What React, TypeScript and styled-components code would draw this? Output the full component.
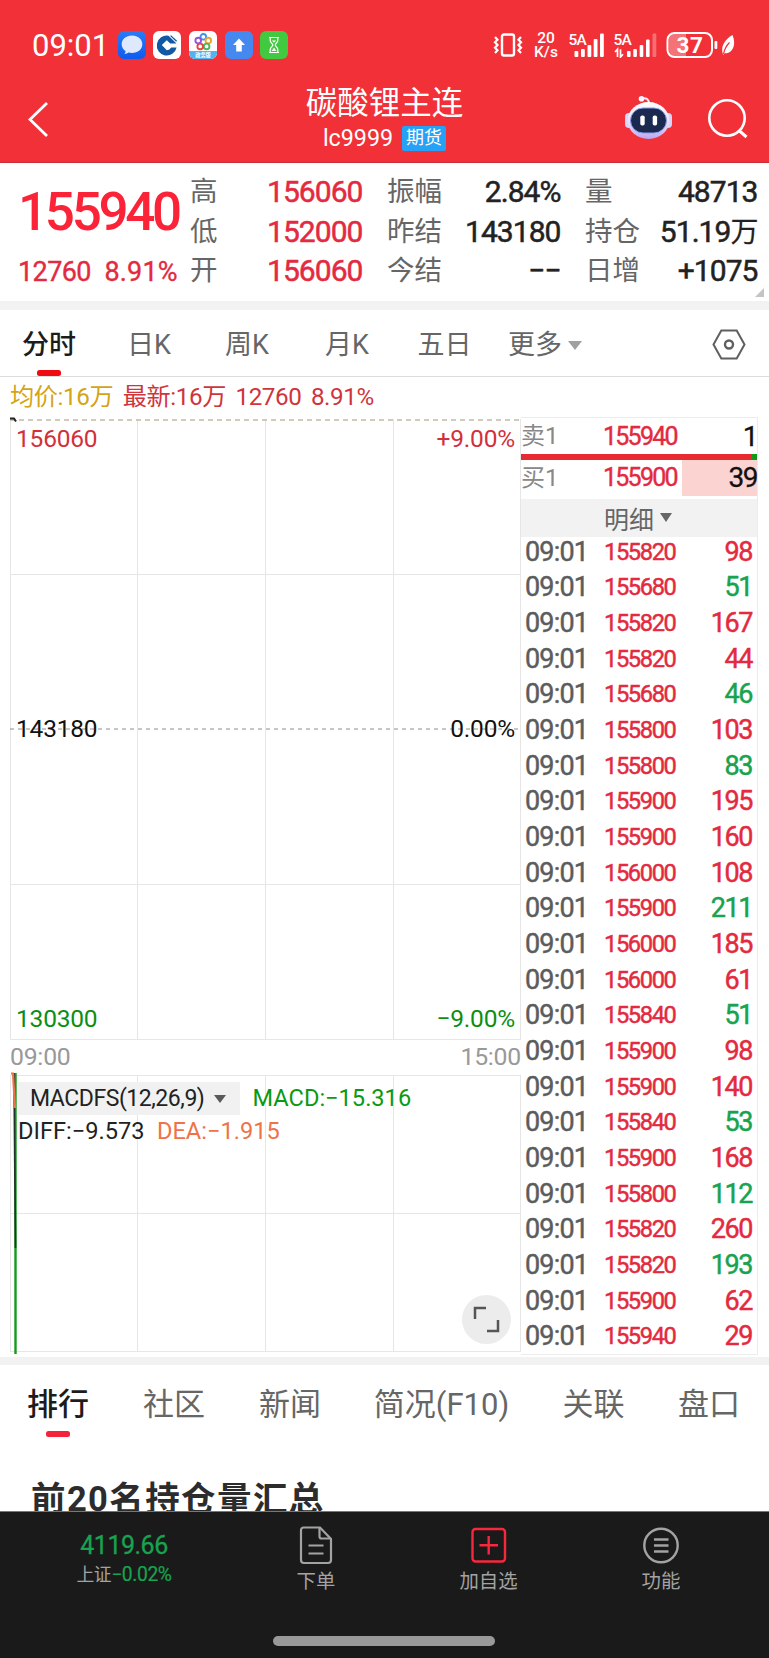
import React from 'react';
import styled, { createGlobalStyle } from 'styled-components';

const Global = createGlobalStyle`
  * { box-sizing: border-box; }
  body {
    margin: 0;
    background: #fff;
    font-family: Roboto, "Noto Sans CJK SC", sans-serif;
    color: #222;
  }
`;

const RED = '#e32a40';
const GREEN = '#17a34f';
const MARK_RED = '#f00a12';

const Screen = styled.div`
  width: 769px;
  height: 1658px;
  display: flex;
  flex-direction: column;
  overflow: hidden;
  background: #fff;
`;

/* ---------- header ---------- */
const Header = styled.header`
  height: 163px;
  flex: none;
  background: #f13137;
  border-bottom: 1px solid #c92f38;
  color: #fff;
`;
const StatusBar = styled.div`
  height: 73px;
  padding: 17px 33px 0 32px;
  display: flex;
  align-items: center;
`;
const Clock = styled.span`
  width: 85.5px;
  font-size: 31px;
  letter-spacing: 0;
  line-height: 36px;
  padding-top: 1px;
`;
const AppIcons = styled.div`
  display: flex;
  gap: 7.7px;
  svg { display: block; }
`;
const StatusRight = styled.div`
  margin-left: auto;
  display: flex;
  align-items: center;
  svg { display: block; }
`;
const NetSpeed = styled.div`
  width: 26px;
  margin: 0 10px 0 10px;
  display: flex;
  flex-direction: column;
  align-items: center;
  font-size: 15.5px;
  font-weight: 500;
  line-height: 14px;
  white-space: nowrap;
`;
const TitleBar = styled.div`
  height: 89px;
  display: grid;
  grid-template-columns: 200px 1fr 200px;
`;
const TitleSide = styled.div<{ $end?: boolean }>`
  display: flex;
  align-items: flex-start;
  justify-content: ${(p) => (p.$end ? 'flex-end' : 'flex-start')};
  padding: ${(p) => (p.$end ? '22px 19px 0 0' : '29px 0 0 26px')};
  gap: 34px;
`;
const TitleMid = styled.div`
  display: flex;
  flex-direction: column;
  align-items: center;
  padding-top: 11px;
`;
const Title = styled.div`
  font-size: 31.5px;
  line-height: 40px;
`;
const SubTitle = styled.div`
  display: flex;
  align-items: center;
  gap: 9px;
  font-size: 23.3px;
  line-height: 28px;
`;
const Badge = styled.span`
  width: 44px;
  height: 25px;
  border-radius: 2px;
  background: #25a2f6;
  font-size: 18px;
  line-height: 24px;
  text-align: center;
`;

/* ---------- quote ---------- */
const Quote = styled.section`
  height: 138px;
  flex: none;
  display: grid;
  grid-template-columns: 190px 172px 25px 173px 25px 172px;
  padding-top: 9px;
  position: relative;
`;
const PriceBox = styled.div`
  padding-left: 18px;
  color: #fb2338;
`;
const BigPrice = styled.div`
  font-size: 53px;
  font-weight: 500;
  letter-spacing: -3.3px;
  line-height: 62px;
  height: 79px;
  padding-top: 9px;
`;
const PriceChange = styled.div`
  display: flex;
  gap: 13.5px;
  color: ${RED};
  font-size: 27px;
  letter-spacing: -0.6px;
  line-height: 42px;
  -webkit-text-stroke: 0.35px currentColor;
  span + span { letter-spacing: 0.2px; }
`;
const StatCol = styled.div`
  display: flex;
  flex-direction: column;
`;
const Stat = styled.div<{ $color?: string }>`
  height: 39.7px;
  line-height: 40px;
  display: flex;
  justify-content: space-between;
  color: ${(p) => p.$color || '#222'};
  white-space: nowrap;
`;
const StatLabel = styled.span`
  font-size: 27.5px;
  color: #666;
`;
const StatValue = styled.span`
  font-size: 30px;
  letter-spacing: -0.95px;
  margin-right: -0.5px;
  -webkit-text-stroke: 0.5px currentColor;
`;
const Wan = styled.span`
  font-size: 28px;
  -webkit-text-stroke: 0.2px currentColor;
`;
const Corner = styled.i`
  position: absolute;
  right: 5px;
  bottom: 4px;
  border-left: 9px solid transparent;
  border-bottom: 9px solid #c4c4c4;
`;
const Divider = styled.div<{ $h: number }>`
  height: ${(p) => p.$h}px;
  flex: none;
  background: #f2f2f2;
`;

/* ---------- period tabs ---------- */
const PeriodTabs = styled.nav`
  height: 67px;
  flex: none;
  border-bottom: 1px solid #dcdcdc;
  display: grid;
  grid-template-columns: 98px 102px 94px 106px 89px 112px 1fr;
  font-size: 27px;
`;
const Tab = styled.div<{ $active?: boolean }>`
  display: flex;
  flex-direction: column;
  align-items: center;
  color: ${(p) => (p.$active ? '#1c1c1c' : '#666')};
  font-weight: ${(p) => (p.$active ? 500 : 400)};
  line-height: 40px;
  padding-top: 15px;
  white-space: nowrap;
`;
const Mark = styled.i<{ $color: string; $gap: number }>`
  width: 24px;
  height: 6px;
  border-radius: 2.5px;
  background: ${(p) => p.$color};
  margin-top: ${(p) => p.$gap}px;
`;
const MoreTab = styled.span`
  display: flex;
  align-items: center;
  gap: 6px;
`;
const Caret = styled.i<{ $w: number; $h: number; $color: string }>`
  border-left: ${(p) => p.$w / 2}px solid transparent;
  border-right: ${(p) => p.$w / 2}px solid transparent;
  border-top: ${(p) => p.$h}px solid ${(p) => p.$color};
`;
const HexWrap = styled.div`
  justify-self: end;
  padding: 18px 23px 0 0;
`;

/* ---------- chart ---------- */
const Legend = styled.div`
  height: 40px;
  flex: none;
  display: flex;
  gap: 9.5px;
  padding-left: 10px;
  font-size: 24.2px;
  letter-spacing: -0.4px;
  line-height: 40px;
  color: #d0343c;
  white-space: nowrap;
`;
const AvgPrice = styled.span`
  color: #d3a416;
`;
const Main = styled.section`
  height: 940px;
  flex: none;
  display: grid;
  grid-template-columns: 521px 237px;
`;
const ChartCol = styled.div`
  display: flex;
  flex-direction: column;
  padding: 2px 0 0 10px;
`;
const Plot = styled.div<{ $h: number }>`
  position: relative;
  height: ${(p) => p.$h}px;
  > svg { display: block; overflow: visible; }
`;
const PlotLabels = styled.div`
  position: absolute;
  inset: 0;
  padding: 5px 6px 6px 6px;
  display: flex;
  flex-direction: column;
  justify-content: space-between;
`;
const LabelRow = styled.div<{ $color: string }>`
  display: flex;
  justify-content: space-between;
  font-size: 24.5px;
  letter-spacing: -0.2px;
  line-height: 30px;
  color: ${(p) => p.$color};
`;
const TimeRow = styled.div`
  height: 35px;
  display: flex;
  justify-content: space-between;
  font-size: 24.8px;
  letter-spacing: -0.25px;
  line-height: 34px;
  color: #999;
`;
const Indicator = styled.div`
  position: absolute;
  left: 8px;
  top: 7px;
  font-size: 23.6px;
`;
const IndRow = styled.div`
  display: flex;
  align-items: center;
  height: 33px;
  line-height: 33px;
  gap: 12.5px;
  white-space: nowrap;
`;
const IndPicker = styled.span`
  width: 222px;
  height: 33px;
  padding-left: 12px;
  display: flex;
  align-items: center;
  gap: 10px;
  background: #f1f1f1;
  font-size: 23px;
  letter-spacing: -0.45px;
`;
const IndValue = styled.span<{ $color: string }>`
  color: ${(p) => p.$color};
`;
const Expand = styled.button`
  position: absolute;
  right: 10px;
  bottom: 8px;
  width: 49px;
  height: 49px;
  padding: 0;
  border: 0;
  border-radius: 50%;
  background: #ececec;
  display: grid;
  place-items: center;
`;

/* ---------- order book ---------- */
const Book = styled.div`
  border: 1px solid #ececec;
  border-left: 0;
  height: 938px;
  display: flex;
  flex-direction: column;
`;
const Level = styled.div<{ $h: number }>`
  height: ${(p) => p.$h}px;
  line-height: ${(p) => p.$h + 1}px;
  display: grid;
  grid-template-columns: 82px 79px 1fr;
  font-size: 25px;
`;
const Side = styled.span`
  color: #888;
  font-size: 24px;
  letter-spacing: 0;
`;
const LevelPrice = styled.span`
  color: ${RED};
  letter-spacing: -1.75px;
  -webkit-text-stroke: 0.4px currentColor;
`;
const LevelQty = styled.span<{ $fill?: boolean }>`
  text-align: right;
  font-size: 28px;
  letter-spacing: -1.5px;
  color: #111;
  background: ${(p) => (p.$fill ? '#fbd3d1' : 'transparent')};
  -webkit-text-stroke: 0.3px currentColor;
`;
const Ratio = styled.div`
  height: 6px;
  background: linear-gradient(to right, #e62c30 0 230px, #109a18 230px);
`;
const DetailHead = styled.div`
  height: 39px;
  margin-top: 4px;
  background: #f2f2f2;
  display: flex;
  align-items: center;
  gap: 6px;
  padding-left: 83px;
  font-size: 25px;
  color: #666;
`;
const Trades = styled.div`
  display: grid;
  grid-auto-rows: 35.68px;
  margin-top: -3px;
`;
const Trade = styled.div`
  display: grid;
  grid-template-columns: 79px 90px 1fr;
  padding: 0 5px 0 4px;
  line-height: 36.5px;
  font-size: 27px;
  -webkit-text-stroke: 0.45px currentColor;
`;
const TradeTime = styled.span`
  color: #5c5c5c;
  letter-spacing: -0.8px;
`;
const TradePrice = styled.span`
  color: ${RED};
  font-size: 23.7px;
  letter-spacing: -1.4px;
`;
const TradeQty = styled.span<{ $up: boolean }>`
  text-align: right;
  letter-spacing: -1.4px;
  color: ${(p) => (p.$up ? RED : GREEN)};
`;

/* ---------- section tabs ---------- */
const SectionTabs = styled.nav`
  height: 85px;
  flex: none;
  display: grid;
  grid-template-columns: 116px 116px 116px 187px 117px 114px;
  font-size: 31px;
`;
const SectionTab = styled(Tab)`
  padding-top: 20px;
`;
const Heading = styled.h2`
  flex: none;
  height: 61px;
  margin: 0;
  padding: 28px 0 0 31px;
  font-size: 34.5px;
  letter-spacing: 1.4px;
  line-height: 42px;
  color: #2c2c2c;
  white-space: nowrap;
`;

/* ---------- footer ---------- */
const Footer = styled.footer`
  height: 147px;
  flex: none;
  position: relative;
  background: #1a1a1a;
  border-top: 1px solid #777;
  display: grid;
  grid-template-columns: 230px 172px 173px 172px;
  align-items: start;
`;
const IndexBox = styled.div`
  padding: 19px 0 0 18px;
  text-align: center;
  color: ${GREEN};
`;
const IndexValue = styled.div`
  font-size: 25px;
  letter-spacing: -0.5px;
  line-height: 30px;
  -webkit-text-stroke: 0.3px currentColor;
`;
const IndexChange = styled.div`
  font-size: 19.3px;
  letter-spacing: -0.4px;
  line-height: 28px;
  -webkit-text-stroke: 0.2px currentColor;
`;
const IndexName = styled.span`
  font-size: 17.8px;
  color: #a3a3a3;
  -webkit-text-stroke: 0;
`;
const Action = styled.div`
  padding-top: 13px;
  display: flex;
  flex-direction: column;
  align-items: center;
  font-size: 19.4px;
  line-height: 28px;
  color: #a3a3a3;
  svg { display: block; margin-bottom: 3px; }
`;
const HomePill = styled.i`
  position: absolute;
  left: 273px;
  bottom: 12px;
  width: 222px;
  height: 10px;
  border-radius: 5px;
  background: #999;
`;

const trades: [string, number, boolean][] = [
  ['155820', 98, true], ['155680', 51, false], ['155820', 167, true], ['155820', 44, true],
  ['155680', 46, false], ['155800', 103, true], ['155800', 83, false], ['155900', 195, true],
  ['155900', 160, true], ['156000', 108, true], ['155900', 211, false], ['156000', 185, true],
  ['156000', 61, true], ['155840', 51, false], ['155900', 98, true], ['155900', 140, true],
  ['155840', 53, false], ['155900', 168, true], ['155800', 112, false], ['155820', 260, true],
  ['155820', 193, false], ['155900', 62, true], ['155940', 29, true],
];

const MessageIcon = () => (
  <svg width="28" height="28" viewBox="0 0 28 28">
    <defs>
      <linearGradient id="msg" x1="0" y1="0" x2="0" y2="1">
        <stop offset="0" stopColor="#2b7bf5" /><stop offset="1" stopColor="#0f5bf0" />
      </linearGradient>
    </defs>
    <rect width="28" height="28" rx="6" fill="url(#msg)" />
    <path d="M14 4.500c6 0 10.300 3.800 10.300 8.800S20 22 14 22c-1.300 0-2.500-.2-3.600-.5-1 .9-2.400 1.400-4 1.400.8-.8 1.200-1.700 1.100-2.800C5 18.500 3.700 16.100 3.700 13.300 3.700 8.300 8 4.500 14 4.500z" fill="#dfe9fd" />
  </svg>
);
const BankIcon = () => (
  <svg width="28" height="28" viewBox="0 0 28 28">
    <rect width="28" height="28" rx="6" fill="#fff" />
    <path d="M15.500 4.700A10 10 0 1 0 23.600 16.500h-5.400a5.500 5.500 0 0 1-4.400 2.800L8.800 14l5-4.800 3.400 3.300h6.300z" fill="#1259a3" />
    <path d="M17.600 4.600l6 5.700" stroke="#1259a3" strokeWidth="1.300" />
    <path d="M13.800 10.500l3.500 3.500-3.500 3.500-3.500-3.500z" fill="#fff" />
  </svg>
);
const FlowerIcon = () => (
  <svg width="28" height="28" viewBox="0 0 28 28">
    <defs><clipPath id="fl"><rect width="28" height="28" rx="6" /></clipPath></defs>
    <g clipPath="url(#fl)">
      <rect width="28" height="28" fill="#fff" />
      <g fill="none" strokeWidth="1.900">
        <circle cx="14.300" cy="5.800" r="2.800" stroke="#3f93e8" />
        <circle cx="19.300" cy="9.600" r="2.800" stroke="#f0a52c" />
        <circle cx="17.600" cy="15.400" r="2.800" stroke="#49b85a" />
        <circle cx="11.200" cy="15.400" r="2.800" stroke="#e8453c" />
        <circle cx="9.200" cy="9.600" r="2.800" stroke="#9a52d6" />
      </g>
      <rect y="20" width="28" height="8" fill="#52b4ee" />
      <text x="14" y="26.200" fontSize="5.200" fontWeight="700" fill="#fff" textAnchor="middle">政务版</text>
    </g>
  </svg>
);
const UploadIcon = () => (
  <svg width="28" height="28" viewBox="0 0 28 28">
    <rect width="28" height="28" rx="6" fill="#4589f0" />
    <path d="M14 7.500l6 6.500h-3.200v6.500h-5.600V14H8z" fill="#fff" />
  </svg>
);
const HourglassIcon = () => (
  <svg width="28" height="28" viewBox="0 0 28 28" fill="none" stroke="#fff" strokeWidth="1.200">
    <rect width="28" height="28" rx="6" fill="#41c93f" stroke="none" />
    <path d="M9 6.500h10M9 21.500h10M10.200 6.500v3c0 2 2.600 3 2.600 4.500s-2.600 2.500-2.600 4.500v3M17.800 6.500v3c0 2-2.600 3-2.600 4.500s2.600 2.500 2.600 4.500v3" />
    <path d="M11.800 9.500h4.400L14 11.800zM14 16.500l2.400 3.500h-4.800z" fill="#fff" stroke="none" />
  </svg>
);

const Vibrate = () => (
  <svg width="30" height="26" viewBox="0 0 30 26" fill="none" stroke="#fff">
    <rect x="9" y="2.500" width="12" height="21" rx="2" strokeWidth="2.400" />
    <path d="M2 5l2.500 2.700L2 10.300 4.500 13 2 15.700l2.500 2.600L2 21M28 5L25.500 7.700l2.500 2.600L25.500 13l2.500 2.700-2.500 2.600 2.500 2.700" strokeWidth="2.200" />
  </svg>
);
const Signals = () => (
  <svg width="97" height="26" viewBox="0 0 97 26" fill="#fff">
    <text x="-0.500" y="12.500" fontSize="15.500" fontWeight="500" letterSpacing="-0.800">5A</text>
    <rect x="5.500" y="19" width="3.800" height="6" rx="1" /><rect x="12" y="17" width="3.800" height="8" rx="1" />
    <rect x="18.500" y="13" width="3.800" height="12" rx="1" /><rect x="24.700" y="7" width="3.800" height="18" rx="1" />
    <rect x="31" y="1.500" width="3.800" height="23.500" rx="1" />
    <text x="44.500" y="12.500" fontSize="15.500" fontWeight="500" letterSpacing="-0.800">5A</text>
    <path d="M46 20l2.500-2.800V25M51.500 17.200V25l2.500-2.800" fill="none" stroke="#fff" strokeWidth="1.700" />
    <rect x="58" y="19" width="3.600" height="6" rx="1" /><rect x="64.300" y="17" width="3.600" height="8" rx="1" />
    <rect x="70.700" y="13" width="3.600" height="12" rx="1" /><rect x="77" y="7.500" width="3.600" height="17.500" rx="1" />
    <rect x="83.500" y="1.500" width="3.800" height="23.500" rx="1" opacity=".3" />
  </svg>
);
const Battery = () => (
  <svg width="70" height="28" viewBox="0 0 70 28">
    <path d="M9 2h11v24H9a6 6 0 0 1-6-6V8a6 6 0 0 1 6-6z" fill="#fff" opacity=".32" />
    <rect x="1.500" y="2" width="44.500" height="24" rx="7" fill="none" stroke="#fff" strokeWidth="2" />
    <text x="24" y="22" fontSize="22.500" fontWeight="700" fill="#fff" textAnchor="middle" letterSpacing="0.500">37</text>
    <rect x="48.500" y="10" width="2.800" height="8" rx="1" fill="#fff" />
    <path d="M66.500 4c3 7 2 14.500-3.500 17.500-1.500.8-3 .8-4.200.4l-1.600 2C54 16 58.500 8.500 66.500 4z" fill="#fff" />
    <path d="M57.500 23c1-5 3-8.500 6-11.500" stroke="#f13137" strokeWidth="1.200" fill="none" />
  </svg>
);
const Robot = () => (
  <svg width="50" height="46" viewBox="0 0 50 46">
    <defs>
      <linearGradient id="rb" x1="0" y1="0" x2="0" y2="1">
        <stop offset="0" stopColor="#fff" /><stop offset=".6" stopColor="#e3dcfb" /><stop offset="1" stopColor="#b9a6f2" />
      </linearGradient>
    </defs>
    <path d="M18 3.500c4-1 6.500.5 7 4" fill="none" stroke="#eee8fb" strokeWidth="2" />
    <circle cx="17.500" cy="3.700" r="2.800" fill="#f6f2ff" />
    <rect x="1" y="18" width="8" height="15" rx="4" fill="#d9d3f5" />
    <rect x="40" y="18" width="8" height="15" rx="4" fill="#d9d3f5" />
    <ellipse cx="24.500" cy="25.500" rx="21" ry="18.500" fill="url(#rb)" />
    <rect x="6.500" y="13" width="36" height="25" rx="12.500" fill="#1b2850" stroke="#8d9ce8" strokeWidth="1" />
    <rect x="16.300" y="20.500" width="4.400" height="10" rx="1.800" fill="#fff" />
    <rect x="28.700" y="20.500" width="4.400" height="10" rx="1.800" fill="#fff" />
  </svg>
);

export default function App() {
  return (
    <Screen>
      <Global />
      <Header>
        <StatusBar>
          <Clock>09:01</Clock>
          <AppIcons>
            <MessageIcon /><BankIcon /><FlowerIcon /><UploadIcon /><HourglassIcon />
          </AppIcons>
          <StatusRight>
            <Vibrate />
            <NetSpeed><span>20</span><span>K/s</span></NetSpeed>
            <Signals />
            <Battery />
          </StatusRight>
        </StatusBar>
        <TitleBar>
          <TitleSide>
            <svg width="24" height="36" viewBox="0 0 24 36" fill="none" stroke="#fff" strokeWidth="2.800">
              <path d="M21 1L4 17.500 21 34" />
            </svg>
          </TitleSide>
          <TitleMid>
            <Title>碳酸锂主连</Title>
            <SubTitle>lc9999<Badge>期货</Badge></SubTitle>
          </TitleMid>
          <TitleSide $end>
            <Robot />
            <svg width="42" height="46" viewBox="0 0 42 46" fill="none" stroke="#fff" strokeWidth="2.600">
              <circle cx="19" cy="23" r="17.700" />
              <path d="M31 35.500l7.500 6.500" strokeWidth="3" />
            </svg>
          </TitleSide>
        </TitleBar>
      </Header>

      <Quote>
        <PriceBox>
          <BigPrice>155940</BigPrice>
          <PriceChange><span>12760</span><span>8.91%</span></PriceChange>
        </PriceBox>
        <StatCol>
          <Stat $color={RED}><StatLabel>高</StatLabel><StatValue>156060</StatValue></Stat>
          <Stat $color={RED}><StatLabel>低</StatLabel><StatValue>152000</StatValue></Stat>
          <Stat $color={RED}><StatLabel>开</StatLabel><StatValue>156060</StatValue></Stat>
        </StatCol>
        <span />
        <StatCol>
          <Stat><StatLabel>振幅</StatLabel><StatValue>2.84%</StatValue></Stat>
          <Stat><StatLabel>昨结</StatLabel><StatValue>143180</StatValue></Stat>
          <Stat><StatLabel>今结</StatLabel><StatValue>−−</StatValue></Stat>
        </StatCol>
        <span />
        <StatCol>
          <Stat><StatLabel>量</StatLabel><StatValue>48713</StatValue></Stat>
          <Stat><StatLabel>持仓</StatLabel><StatValue>51.19<Wan>万</Wan></StatValue></Stat>
          <Stat><StatLabel>日增</StatLabel><StatValue>+1075</StatValue></Stat>
        </StatCol>
        <Corner />
      </Quote>
      <Divider $h={9} />

      <PeriodTabs>
        <Tab $active>分时<Mark $color={MARK_RED} $gap={5} /></Tab>
        <Tab>日K</Tab>
        <Tab>周K</Tab>
        <Tab>月K</Tab>
        <Tab>五日</Tab>
        <Tab><MoreTab>更多<Caret $w={14} $h={9} $color="#a0a0a0" /></MoreTab></Tab>
        <HexWrap>
          <svg width="34" height="34" viewBox="0 0 34 34" fill="none" stroke="#5f5f5f" strokeWidth="2">
            <path d="M9.300 2.500h15.400L32.500 16.500l-7.800 14H9.300L1.500 16.500z" />
            <circle cx="17" cy="16.500" r="4" strokeWidth="2.400" />
          </svg>
        </HexWrap>
      </PeriodTabs>

      <Legend>
        <AvgPrice>均价:16万</AvgPrice>
        <span>最新:16万</span>
        <span>12760</span>
        <span>8.91%</span>
      </Legend>

      <Main>
        <ChartCol>
          <Plot $h={621}>
            <svg width="511" height="621" viewBox="0 0 511 621" fill="none">
              <g stroke="#e6e6e6">
                <path d="M.5 0V620.500H511M127.500 0V620.500M255.500 0V620.500M383.500 0V620.500M510.500 0V620.500" />
                <path d="M0 155.500H511M0 465.500H511" />
              </g>
              <path d="M0 1H511" stroke="#c4bba2" strokeWidth="1.600" strokeDasharray="5 4" />
              <path d="M0 310H511" stroke="#8f8f8f" strokeWidth="1.200" strokeDasharray="4 4" />
              <path d="M0 -.5h4l2 3" stroke="#222" strokeWidth="2" />
            </svg>
            <PlotLabels>
              <LabelRow $color="#d2303a"><span>156060</span><span>+9.00%</span></LabelRow>
              <LabelRow $color="#111"><span>143180</span><span>0.00%</span></LabelRow>
              <LabelRow $color="#0a8f12"><span>130300</span><span>−9.00%</span></LabelRow>
            </PlotLabels>
          </Plot>
          <TimeRow><span>09:00</span><span>15:00</span></TimeRow>
          <Plot $h={277}>
            <Indicator>
              <IndRow>
                <IndPicker>MACDFS(12,26,9)<Caret $w={12} $h={8} $color="#5a5a5a" /></IndPicker>
                <IndValue $color="#0a9a12">MACD:−15.316</IndValue>
              </IndRow>
              <IndRow>
                <IndValue $color="#222">DIFF:−9.573</IndValue>
                <IndValue $color="#ee7347">DEA:−1.915</IndValue>
              </IndRow>
            </Indicator>
            <svg width="511" height="277" viewBox="0 0 511 277" fill="none">
              <path stroke="#e6e6e6" d="M.5 0V277M127.500 0V277M255.500 0V277M383.500 0V277M510.500 0V277M0 .5H511M0 138.500H511M0 276.500H511" />
              <path d="M5.500 -2V279" stroke="#149a1c" strokeWidth="2.400" />
              <path d="M4 -2L5.500 173" stroke="#20342a" strokeWidth="1.700" />
              <path d="M1 -1.500H3L5 33" stroke="#ee7347" strokeWidth="2.200" />
            </svg>
            <Expand>
              <svg width="27" height="27" viewBox="0 0 27 27" fill="none" stroke="#555" strokeWidth="2.500">
                <path d="M2 13V2h11M25 14v11H14" />
              </svg>
            </Expand>
          </Plot>
        </ChartCol>

        <Book>
          <Level $h={36}><Side>卖1</Side><LevelPrice>155940</LevelPrice><LevelQty>1</LevelQty></Level>
          <Ratio />
          <Level $h={35}><Side>买1</Side><LevelPrice>155900</LevelPrice><LevelQty $fill>39</LevelQty></Level>
          <DetailHead>明细<Caret $w={12} $h={9} $color="#666" /></DetailHead>
          <Trades>
            {trades.map(([price, qty, up], i) => (
              <Trade key={i}>
                <TradeTime>09:01</TradeTime>
                <TradePrice>{price}</TradePrice>
                <TradeQty $up={up}>{qty}</TradeQty>
              </Trade>
            ))}
          </Trades>
        </Book>
      </Main>
      <Divider $h={8} />

      <SectionTabs>
        <SectionTab $active>排行<Mark $color="#f5223c" $gap={6} /></SectionTab>
        <SectionTab>社区</SectionTab>
        <SectionTab>新闻</SectionTab>
        <SectionTab>简况(F10)</SectionTab>
        <SectionTab>关联</SectionTab>
        <SectionTab>盘口</SectionTab>
      </SectionTabs>
      <Heading>前20名持仓量汇总</Heading>

      <Footer>
        <IndexBox>
          <IndexValue>4119.66</IndexValue>
          <IndexChange><IndexName>上证</IndexName>−0.02%</IndexChange>
        </IndexBox>
        <Action>
          <svg width="40" height="40" viewBox="0 0 40 40" fill="none" stroke="#a3a3a3" strokeWidth="2.200">
            <path d="M7.500 2.500h16.500L35 14v21a3 3 0 0 1-3 3H8a3 3 0 0 1-3-3V5a2.500 2.500 0 0 1 2.500-2.500z" />
            <path d="M23.500 3v8.500a2 2 0 0 0 2 2H34M12.500 20.500h15M12.500 28.500h15" />
          </svg>
          下单
        </Action>
        <Action>
          <svg width="40" height="40" viewBox="0 0 40 40" fill="none" stroke="#f5283c" strokeWidth="2.400">
            <rect x="3.500" y="4" width="32.500" height="32.500" rx="3" />
            <path d="M19.700 11v18.500M10.500 20.300h18.500" />
          </svg>
          加自选
        </Action>
        <Action>
          <svg width="40" height="40" viewBox="0 0 40 40" fill="none" stroke="#a3a3a3" strokeWidth="2.400">
            <circle cx="20" cy="20.500" r="16.700" />
            <path d="M13 14.500h14.500M13 20.500h14.500M13 26.500h14.500" />
          </svg>
          功能
        </Action>
        <HomePill />
      </Footer>
    </Screen>
  );
}
